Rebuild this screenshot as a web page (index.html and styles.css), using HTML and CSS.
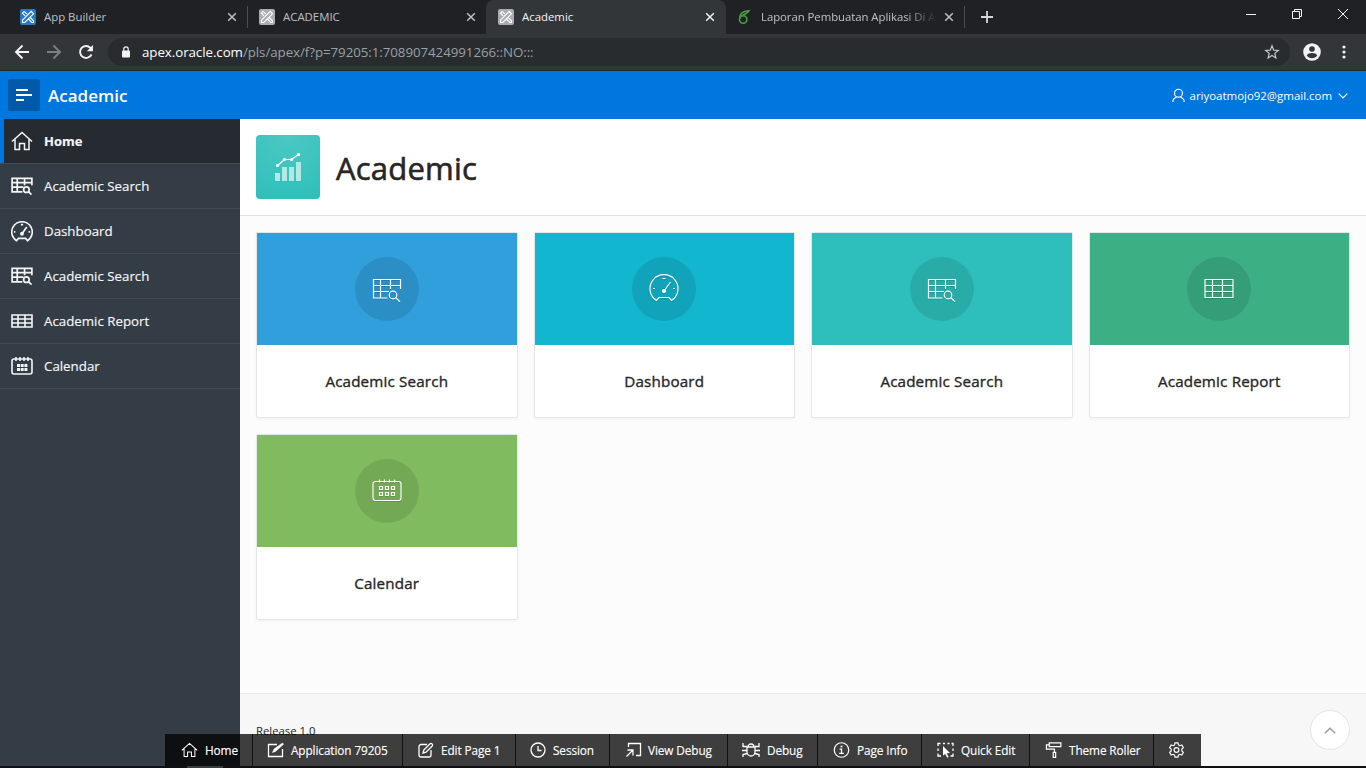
FILE: index.html
```html
<!DOCTYPE html>
<html lang="en">
<head>
<meta charset="utf-8">
<title>Academic</title>
<link rel="stylesheet" href="styles.css">
</head>
<body>
<svg class="defs" width="0" height="0">
  <symbol id="home" viewBox="0 0 22 20"><path d="M1 10.500 11 1.500l10 9M4 8.500v10h4.500v-6h5v6H18v-10"/></symbol>
  <symbol id="tsearch" viewBox="0 0 30 24"><path d="M15.500 20H1.500V1.500h27V11M1.500 7.500h27M1.500 13.500H17M8.500 1.500V20M18.500 1.500V11"/><circle cx="21" cy="17" r="3.800"/><path d="m23.800 19.800 4.200 4"/></symbol>
  <symbol id="table" viewBox="0 0 30 20"><path d="M1 1.500h28v18H1zM1 7.500h28M1 13.500h28M8.500 1.500v18M18.500 1.500v18"/></symbol>
  <symbol id="tablebold" viewBox="0 0 22 14"><path d="M1 1h20v12H1zM1 5h20M1 9h20M7 1v12M14 1v12"/></symbol>
  <symbol id="gauge" viewBox="0 0 30 28"><path d="M7.500 26.500a14 14 0 1 1 15 0L20 23.500H10zM15 17l6.500-9M13.500 4.500h3M4 14.500h2M24 14.500h2"/><circle cx="15" cy="17" r="1.500" fill="currentColor"/></symbol>
  <symbol id="cal" viewBox="0 0 30 22"><rect x="1" y="2.500" width="28" height="19" rx="2.500"/><path d="M7.500 0.500v3M12.500 0.500v3M17.500 0.500v3M22.500 0.500v3M7.500 7.500h3v3h-3zM13.500 7.500h3v3h-3zM19.500 7.500h3v3h-3zM7.500 13.500h3v3h-3zM13.500 13.500h3v3h-3zM19.500 13.500h3v3h-3z"/></symbol>
  <symbol id="calbold" viewBox="0 0 22 18"><rect x="1" y="2" width="20" height="15" rx="2"/><path d="M5 0v4M9 0v4M13 0v4M17 0v4"/><path d="M6 8.500h10.500M6 12.500h10.500" stroke-width="3" stroke-dasharray="3 .7"/></symbol>
  <symbol id="x" viewBox="0 0 10 10"><path d="m1.200 1.200 7.600 7.600m0-7.600-7.600 7.600"/></symbol>
  <symbol id="apex" viewBox="0 0 16 16"><rect width="16" height="16" rx="2" fill="currentColor" stroke="none"/><path stroke="#fff" stroke-width="1.100" d="M4.200 2.400 6.900 5.100M9.700 8l3.800 3.800v1.700h-1.700L8 9.700M5.100 6.900 2.400 4.200 4.200 2.400M2.500 13.500v-2.300l8.700-8.800 2.300 2.400-8.700 8.700z"/></symbol>
</svg>

<header class="browser">
  <div class="tabs">
    <div class="tab t1"><svg class="fav blue"><use href="#apex"/></svg><span>App Builder</span><svg class="close"><use href="#x"/></svg></div>
    <div class="tab t2"><svg class="fav"><use href="#apex"/></svg><span>ACADEMIC</span><svg class="close"><use href="#x"/></svg></div>
    <div class="tab t3 current"><svg class="fav"><use href="#apex"/></svg><span>Academic</span><svg class="close"><use href="#x"/></svg></div>
    <div class="tab t4"><svg class="fav leaf" viewBox="0 0 16 16"><circle cx="6.200" cy="10.500" r="3.700"/><path d="M2.700 9.500C2.500 5 5.500 2.200 12 1.700 10.500 4.500 8 4.800 5.500 6.500"/></svg><span class="fade">Laporan Pembuatan Aplikasi Di A</span><svg class="close"><use href="#x"/></svg></div>
    <svg class="plus" viewBox="0 0 12 12"><path d="M6 0v12M0 6h12"/></svg>
    <div class="window">
      <svg viewBox="0 0 12 12"><path d="M1 6.500h10"/></svg>
      <svg viewBox="0 0 12 12"><path d="M1.500 3.500h7v7h-7zM3.500 3.500v-2h7v7h-2"/></svg>
      <svg viewBox="0 0 12 12"><path d="m1 1 10 10M11 1 1 11"/></svg>
    </div>
  </div>
  <div class="nav">
    <svg viewBox="0 0 16 16"><path d="M15 8H2m6.500-6.500L2 8l6.500 6.500"/></svg>
    <svg class="dim" viewBox="0 0 16 16"><path d="M1 8h13M7.500 1.500 14 8l-6.500 6.500"/></svg>
    <svg viewBox="0 0 16 16"><path d="M13.500 10.500A6 6 0 1 1 12.400 3.800L14 5.500"/><path d="M15 1v6.200H8.800z" fill="currentColor" stroke="none"/></svg>
    <div class="address">
      <svg class="lock" viewBox="0 0 10 12"><rect x="1" y="4.500" width="8" height="7" rx="1" fill="currentColor" stroke="none"/><path d="M2.800 5V3a2.200 2.200 0 0 1 4.400 0v2"/></svg>
      <p class="url"><b>apex.oracle.com</b>/pls/apex/f?p=79205:1:708907424991266::NO:::</p>
      <svg class="star" viewBox="0 0 16 16"><path d="m8 1.800 1.700 4.300 4.600.3-3.500 3 1.100 4.500L8 11.500l-3.900 2.400 1.100-4.500-3.500-3 4.600-.3z"/></svg>
    </div>
    <svg class="avatar" viewBox="0 0 18 18"><circle cx="9" cy="9" r="8.800" fill="#f1f3f4"/><circle cx="9" cy="6" r="2.800" fill="#323639"/><path d="M3.800 12.500c1.700-3.200 8.700-3.200 10.400 0-2.300 3.600-8.100 3.600-10.400 0z" fill="#323639"/></svg>
    <svg class="dots" viewBox="0 0 4 14"><circle cx="2" cy="2" r="1.600"/><circle cx="2" cy="7" r="1.600"/><circle cx="2" cy="12" r="1.600"/></svg>
  </div>
</header>

<div class="appbar">
  <div class="burger"><svg viewBox="0 0 16 12"><path d="M0 1h12M0 6h16M0 11h8"/></svg></div>
  <strong>Academic</strong>
  <div class="user">
    <svg class="person" viewBox="0 0 14 16"><circle cx="7" cy="5.500" r="4.300"/><path d="M1 15v-1.500C1 11.500 3 11 4.800 9.500M13 15v-1.500c0-2-2-2.500-3.800-4"/></svg>
    <span>ariyoatmojo92@gmail.com</span>
    <svg class="chev" viewBox="0 0 10 6"><path d="m.7.700 4.300 4.300L9.300.7"/></svg>
  </div>
</div>

<div class="layout">
  <nav class="side">
    <a class="active"><svg class="s-home"><use href="#home"/></svg><span>Home</span></a>
    <a><svg class="s-search"><use href="#tsearch"/></svg><span>Academic Search</span></a>
    <a><svg class="s-gauge"><use href="#gauge"/></svg><span>Dashboard</span></a>
    <a><svg class="s-search"><use href="#tsearch"/></svg><span>Academic Search</span></a>
    <a><svg class="s-table"><use href="#tablebold"/></svg><span>Academic Report</span></a>
    <a><svg class="s-cal"><use href="#calbold"/></svg><span>Calendar</span></a>
  </nav>
  <main>
    <section class="hero">
      <div class="logo"><svg viewBox="0 0 28 30"><path d="M1 21h5v8H1zM8 15h5v14H8zM15 15h5v14h-5zM22 10h5v19h-5z" fill="#b3e8e5" stroke="none"/><path d="m3.500 13.500 7-6h7l7-5"/><g fill="#fff" stroke="none"><circle cx="3.500" cy="13.500" r="1.600"/><circle cx="10.500" cy="7.500" r="1.600"/><circle cx="17.500" cy="7.500" r="1.600"/><circle cx="24.500" cy="2.500" r="1.600"/></g></svg></div>
      <h1>Academic</h1>
    </section>
    <section class="cards">
      <article class="card c1"><div class="top"><i><svg class="k-search"><use href="#tsearch"/></svg></i></div><h3>Academic Search</h3></article>
      <article class="card c2"><div class="top"><i><svg class="k-gauge"><use href="#gauge"/></svg></i></div><h3>Dashboard</h3></article>
      <article class="card c3"><div class="top"><i><svg class="k-search"><use href="#tsearch"/></svg></i></div><h3>Academic Search</h3></article>
      <article class="card c4"><div class="top"><i><svg class="k-table"><use href="#table"/></svg></i></div><h3>Academic Report</h3></article>
      <article class="card c5"><div class="top"><i><svg class="k-cal"><use href="#cal"/></svg></i></div><h3>Calendar</h3></article>
    </section>
    <footer>Release 1.0</footer>
  </main>
</div>

<div class="totop"><svg viewBox="0 0 12 7"><path d="m.8 6.200 5.200-5 5.200 5"/></svg></div>

<div class="dev">
  <a class="d1"><svg class="w17" viewBox="0 0 22 20"><use href="#home"/></svg><span>Home</span></a>
  <a class="d2"><svg class="w17" viewBox="0 0 17 16"><path d="M10 2.500H1.500v12h14V7"/><path d="M5.500 10.500 7 7l8.500-6 1 1.300L8.500 9.500z" fill="currentColor" stroke-width=".5"/></svg><span>Application 79205</span></a>
  <a class="d3"><svg class="w16" viewBox="0 0 16 16"><path d="M9 2.500H3a2 2 0 0 0-2 2V13a2 2 0 0 0 2 2h8a2 2 0 0 0 2-2V8M5 11l.800-3L12 1.800c1.300-1.200 3.500 1 2.200 2.200L8 10.200z"/></svg><span>Edit Page 1</span></a>
  <a class="d4"><svg class="w16" viewBox="0 0 16 16"><circle cx="8" cy="8" r="7"/><path d="M8 4v4.500h3.500"/></svg><span>Session</span></a>
  <a class="d5"><svg class="w16" viewBox="0 0 16 16"><path d="M3.500 5V1.500h12v12H11M1.500 14.500 8 8M2.500 8H8v5.500"/></svg><span>View Debug</span></a>
  <a class="d6"><svg class="w18" viewBox="0 0 18 16"><path d="M5 5h8v5a4 4 0 0 1-8 0zM6 5c0-4 6-4 6 0M1 1v3.500h4M17 1v3.500h-4M1 15v-2.500l4-1M17 15v-2.500l-4-1M0 8.500h5M13 8.500h5"/></svg><span>Debug</span></a>
  <a class="d7"><svg class="w17" viewBox="0 0 17 17"><circle cx="8.500" cy="8.500" r="7.700"/><path d="M6.500 7.500h2v4.500M6 12h5"/><path d="M7.500 4.800h2" stroke-width="1.800"/></svg><span>Page Info</span></a>
  <a class="d8"><svg class="w17" viewBox="0 0 17 16"><path d="M1 4V1.500h2.500M6 1.500h2M10.500 1.500h2M14.500 1.500H16V4M16 6.500V9M16 11.500V14h-2.500M1 6.500V9M1 11.500V14h3"/><path d="m6 4 7 7-3.300.2 2 3.800-1.500.8-2-3.800L6 13.500z" fill="currentColor" stroke="none"/></svg><span>Quick Edit</span></a>
  <a class="d9"><svg class="w17" viewBox="0 0 17 17"><path d="M4 1h12.300v4H4zM4 3H1v4.500h8.500V11M8.200 11h2.600v5.300H8.200z"/></svg><span>Theme Roller</span></a>
  <a class="d10"><svg class="w17" viewBox="0 0 18 18"><path d="M7.300 1h3.400l.5 2.300 1.500.9 2.300-.8 1.700 3L15 8v2l1.700 1.600-1.700 3-2.300-.8-1.500.9-.5 2.300H7.300l-.5-2.300-1.500-.9-2.300.8-1.700-3L3 10V8L1.300 6.400l1.700-3 2.300.8 1.500-.9z"/><circle cx="9" cy="9" r="2.700"/></svg></a>
</div>
<div class="taskbar"><i></i></div>
</body>
</html>
```
FILE: styles.css
```css
* { box-sizing: border-box; }
body { margin: 0; width: 1366px; height: 768px; overflow: hidden; position: relative; font-family: "Open Sans", "Noto Sans", sans-serif; font-size: 13.3px; background: #fcfcfc; }
svg { fill: none; stroke: currentColor; stroke-width: 1.2; flex: none; display: block; overflow: visible; }
.defs { position: absolute; }
h1, h3, p { margin: 0; }

.browser { height: 71px; background: #323639; border-bottom: 1px solid #232628; color: #f1f3f4; }
.tabs { display: flex; height: 34px; background: #202124; font-size: 11.4px; }
.tab { display: flex; align-items: center; width: 239px; height: 34px; padding: 0 10px 0 12px; color: #bdc1c6; }
.tab span { flex: 1; margin: -1px 0 0 8px; white-space: nowrap; overflow: hidden; }
.t1 { width: 247px; padding-left: 20px; }
.t2 { border-left: 1px solid; padding-left: 11px; border-image: linear-gradient(#202124 7px, #4a4d51 7px, #4a4d51 27px, #202124 27px) 1; }
.t4 { border-right: 1px solid; border-image: linear-gradient(#202124 7px, #4a4d51 7px, #4a4d51 27px, #202124 27px) 1; padding-left: 11px; }
.current { background: #323639; border-radius: 8px 8px 0 0; color: #f1f3f4; width: 240px; padding-right: 11px; }
.tab .fade { letter-spacing: -.06px; margin-right: 7px; -webkit-mask-image: linear-gradient(90deg, #000 82%, transparent); mask-image: linear-gradient(90deg, #000 82%, transparent); }
.fav { width: 16px; height: 16px; color: #a9acb0; }
.blue { color: #2878c4; }
.leaf { color: #46a33c; stroke-width: 1.6; }
.close { width: 10px; height: 10px; stroke-width: 1.5; }
.plus { width: 12px; height: 12px; margin: 11px 0 0 16px; stroke-width: 1.8; color: #d5d7da; }
.window { display: flex; gap: 34px; margin: 8px 17px 0 auto; }
.window svg { width: 12px; height: 12px; stroke-width: 1; }
.nav { display: flex; align-items: center; height: 36px; padding: 0 20px 0 14px; }
.nav > svg { width: 16px; height: 16px; margin-right: 16px; stroke-width: 1.9; }
.nav > .dim { color: #7d8083; }
.address { display: flex; align-items: center; flex: 1; height: 28px; margin-left: -2px; border-radius: 14px; background: #282c2f; padding: 0 10px 0 13px; }
.lock { width: 10px; height: 12px; }
.url { flex: 1; margin-left: 11px; font-size: 13.3px; letter-spacing: -.05px; color: #9aa0a6; }
.url b { font-weight: 400; color: #fff; }
.star { width: 16px; height: 16px; color: #c5c8cb; }
.nav > .avatar { width: 18px; height: 18px; margin: 0 21px 0 13px; stroke: none; }
.nav > .dots { width: 4px; height: 14px; margin: 0; fill: currentColor; stroke: none; }

.appbar { display: flex; align-items: center; height: 48px; padding: 0 18px 0 8px; background: #0076df; color: #fff; }
.burger { display: flex; align-items: center; justify-content: center; width: 32px; height: 32px; border-radius: 2px; background: #0059a9; }
.burger svg { width: 16px; height: 12px; stroke-width: 2; }
.appbar strong { margin-left: 8px; font-size: 17px; font-weight: 600; }
.user { display: flex; align-items: center; margin: 1px 0 0 auto; font-size: 11.45px; }
.person { width: 13px; height: 15px; margin-right: 5px; }
.chev { width: 10px; height: 6px; margin-left: 6px; }

.layout { display: flex; height: 649px; }
.side { width: 240px; background: #343d46; color: #f5f6f7; }
.side a { display: flex; align-items: center; height: 45px; padding-left: 11px; border-bottom: 1px solid #434c55; }
.side span { margin-left: 11px; -webkit-text-stroke: .15px; }
.side svg { width: 22px; }
.side .active { background: #252b31; font-weight: 700; font-size: 13px; box-shadow: inset 4px 0 #0076df; }
.s-home { height: 20px; stroke-width: 1.5; }
.s-search { height: 18px; stroke-width: 2.3; }
.s-gauge { height: 21px; stroke-width: 2.3; }
.s-table { height: 14px; stroke-width: 1.6; }
.s-cal { height: 18px; stroke-width: 1.6; }

main { display: flex; flex-direction: column; flex: 1; background: #fcfcfc; color: #262626; }
.hero { display: flex; align-items: center; height: 97px; padding-left: 16px; border-bottom: 1px solid #e2e2e2; background: #fff; }
.logo { display: flex; align-items: center; justify-content: center; width: 64px; height: 64px; border-radius: 4px; color: #fff; background: radial-gradient(circle at 50% 0, #4dc8c3, #2dbfbb); }
.logo svg { width: 28px; height: 30px; }
h1 { margin: 1px 0 0 16px; font-size: 31px; font-weight: 400; letter-spacing: .2px; line-height: 40px; -webkit-text-stroke: .6px; }
.cards { display: grid; grid-template-columns: repeat(4, 1fr); align-content: start; gap: 16px; height: 477px; padding: 16px; }
.card { height: 186px; border: 1px solid #e6e6e6; border-radius: 2px; background: #fff; box-shadow: 0 2px 3px rgba(0,0,0,.03); }
.top { display: flex; align-items: center; justify-content: center; height: 112px; color: #fff; }
.top i { display: flex; align-items: center; justify-content: center; width: 64px; height: 64px; border-radius: 50%; background: rgba(0,0,0,.1); }
.top svg { width: 30px; filter: drop-shadow(0 1px 0 rgba(0,0,0,.12)); }
.k-search { height: 24px; margin-top: 1px; }
.k-gauge { height: 28px; margin-top: -2px; }
.k-table { height: 20px; margin-top: -2px; }
.k-cal { height: 22px; margin-top: -2px; }
.c1 .top { background: #309fdb; }
.c2 .top { background: #13b6cf; }
.c3 .top { background: #2ebfbc; }
.c4 .top { background: #3caf85; }
.c5 .top { background: #81bb5f; }
h3 { padding-top: 24px; font-size: 15.2px; font-weight: 400; letter-spacing: .16px; line-height: 24px; text-align: center; -webkit-text-stroke: .35px; }
footer { flex: 1; border-top: 1px solid #e9e9e9; background: #f7f7f7; padding: 29px 16px 0; font-size: 11.3px; line-height: 16px; }

.totop { position: absolute; left: 1310px; top: 710px; display: flex; align-items: center; justify-content: center; width: 40px; height: 40px; border: 1px solid #e5e5e5; border-radius: 50%; background: #fff; color: #999; }
.totop svg { width: 12px; height: 7px; stroke-width: 1.4; }
.dev { position: absolute; left: 165px; top: 734px; display: flex; height: 32px; background: rgba(0,0,0,.75); color: #fff; font-size: 11.8px; letter-spacing: -.1px; white-space: nowrap; }
.dev a { display: flex; align-items: center; gap: 7px; padding-left: 14px; border-right: 1px solid #111; }
.dev span { -webkit-text-stroke: .15px; }
.dev svg { height: 16px; stroke-width: 1.3; }
.w16 { width: 16px; } .w17 { width: 17px; } .w18 { width: 18px; }
.dev .d1 { width: 88px; padding-left: 16px; }
.dev .d2 { width: 150px; }
.dev .d3 { width: 113px; padding-left: 15px; }
.dev .d4 { width: 94px; }
.dev .d5 { width: 118px; padding-left: 15px; }
.dev .d6 { width: 90px; }
.dev .d7 { width: 104px; padding-left: 15px; }
.dev .d8 { width: 108px; padding-left: 15px; }
.dev .d9 { width: 124px; padding-left: 15px; }
.dev .d10 { width: 47px; padding-left: 14px; border: 0; }
.taskbar { position: absolute; left: 0; top: 766px; width: 1366px; height: 2px; background: #101014; }
.taskbar i { display: block; width: 36px; height: 2px; margin-left: 187px; background: #3c3c3f; }
```
